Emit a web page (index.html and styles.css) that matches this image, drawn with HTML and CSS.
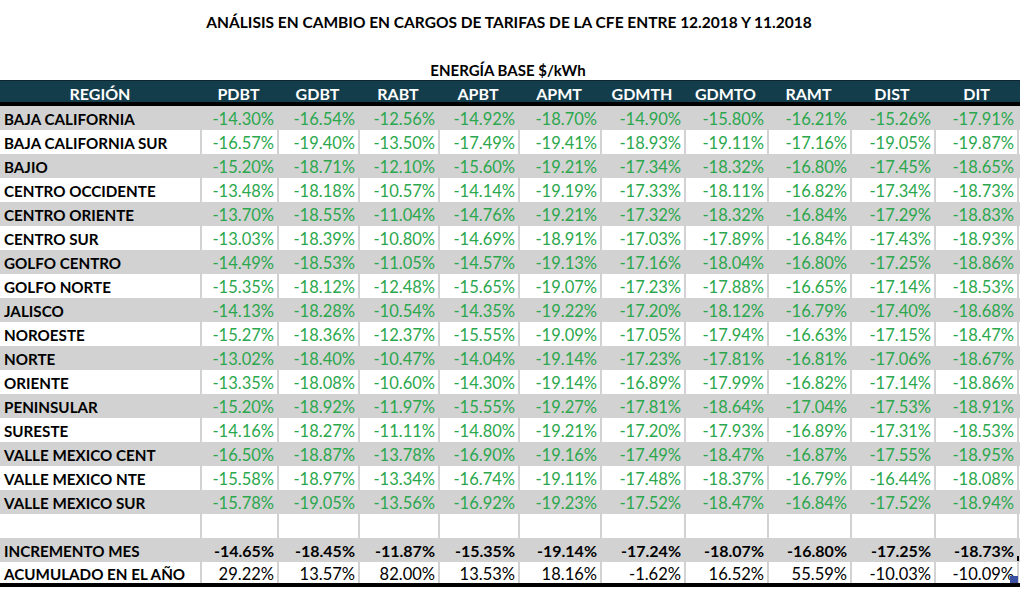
FILE: index.html
```html
<!DOCTYPE html>
<html lang="es">
<head>
<meta charset="utf-8">
<title>Análisis en cambio en cargos de tarifas de la CFE</title>
<link rel="stylesheet" href="styles.css">
</head>
<body>
<div class="sheet">
  <h1 class="title">ANÁLISIS EN CAMBIO EN CARGOS DE TARIFAS DE LA CFE ENTRE 12.2018 Y 11.2018</h1>
  <h2 class="subtitle">ENERGÍA BASE $/kWh</h2>
  <div class="grid">
    <div class="row head">
      <div class="c">REGIÓN</div><div class="c">PDBT</div><div class="c">GDBT</div><div class="c">RABT</div><div class="c">APBT</div><div class="c">APMT</div><div class="c">GDMTH</div><div class="c">GDMTO</div><div class="c">RAMT</div><div class="c">DIST</div><div class="c">DIT</div>
    </div>
    <div class="row shade"><div class="c name">BAJA CALIFORNIA</div><div class="c n">-14.30%</div><div class="c n">-16.54%</div><div class="c n">-12.56%</div><div class="c n">-14.92%</div><div class="c n">-18.70%</div><div class="c n">-14.90%</div><div class="c n">-15.80%</div><div class="c n">-16.21%</div><div class="c n">-15.26%</div><div class="c n">-17.91%</div></div>
    <div class="row"><div class="c name">BAJA CALIFORNIA SUR</div><div class="c n">-16.57%</div><div class="c n">-19.40%</div><div class="c n">-13.50%</div><div class="c n">-17.49%</div><div class="c n">-19.41%</div><div class="c n">-18.93%</div><div class="c n">-19.11%</div><div class="c n">-17.16%</div><div class="c n">-19.05%</div><div class="c n">-19.87%</div></div>
    <div class="row shade"><div class="c name">BAJIO</div><div class="c n">-15.20%</div><div class="c n">-18.71%</div><div class="c n">-12.10%</div><div class="c n">-15.60%</div><div class="c n">-19.21%</div><div class="c n">-17.34%</div><div class="c n">-18.32%</div><div class="c n">-16.80%</div><div class="c n">-17.45%</div><div class="c n">-18.65%</div></div>
    <div class="row"><div class="c name">CENTRO OCCIDENTE</div><div class="c n">-13.48%</div><div class="c n">-18.18%</div><div class="c n">-10.57%</div><div class="c n">-14.14%</div><div class="c n">-19.19%</div><div class="c n">-17.33%</div><div class="c n">-18.11%</div><div class="c n">-16.82%</div><div class="c n">-17.34%</div><div class="c n">-18.73%</div></div>
    <div class="row shade"><div class="c name">CENTRO ORIENTE</div><div class="c n">-13.70%</div><div class="c n">-18.55%</div><div class="c n">-11.04%</div><div class="c n">-14.76%</div><div class="c n">-19.21%</div><div class="c n">-17.32%</div><div class="c n">-18.32%</div><div class="c n">-16.84%</div><div class="c n">-17.29%</div><div class="c n">-18.83%</div></div>
    <div class="row"><div class="c name">CENTRO SUR</div><div class="c n">-13.03%</div><div class="c n">-18.39%</div><div class="c n">-10.80%</div><div class="c n">-14.69%</div><div class="c n">-18.91%</div><div class="c n">-17.03%</div><div class="c n">-17.89%</div><div class="c n">-16.84%</div><div class="c n">-17.43%</div><div class="c n">-18.93%</div></div>
    <div class="row shade"><div class="c name">GOLFO CENTRO</div><div class="c n">-14.49%</div><div class="c n">-18.53%</div><div class="c n">-11.05%</div><div class="c n">-14.57%</div><div class="c n">-19.13%</div><div class="c n">-17.16%</div><div class="c n">-18.04%</div><div class="c n">-16.80%</div><div class="c n">-17.25%</div><div class="c n">-18.86%</div></div>
    <div class="row"><div class="c name">GOLFO NORTE</div><div class="c n">-15.35%</div><div class="c n">-18.12%</div><div class="c n">-12.48%</div><div class="c n">-15.65%</div><div class="c n">-19.07%</div><div class="c n">-17.23%</div><div class="c n">-17.88%</div><div class="c n">-16.65%</div><div class="c n">-17.14%</div><div class="c n">-18.53%</div></div>
    <div class="row shade"><div class="c name">JALISCO</div><div class="c n">-14.13%</div><div class="c n">-18.28%</div><div class="c n">-10.54%</div><div class="c n">-14.35%</div><div class="c n">-19.22%</div><div class="c n">-17.20%</div><div class="c n">-18.12%</div><div class="c n">-16.79%</div><div class="c n">-17.40%</div><div class="c n">-18.68%</div></div>
    <div class="row"><div class="c name">NOROESTE</div><div class="c n">-15.27%</div><div class="c n">-18.36%</div><div class="c n">-12.37%</div><div class="c n">-15.55%</div><div class="c n">-19.09%</div><div class="c n">-17.05%</div><div class="c n">-17.94%</div><div class="c n">-16.63%</div><div class="c n">-17.15%</div><div class="c n">-18.47%</div></div>
    <div class="row shade"><div class="c name">NORTE</div><div class="c n">-13.02%</div><div class="c n">-18.40%</div><div class="c n">-10.47%</div><div class="c n">-14.04%</div><div class="c n">-19.14%</div><div class="c n">-17.23%</div><div class="c n">-17.81%</div><div class="c n">-16.81%</div><div class="c n">-17.06%</div><div class="c n">-18.67%</div></div>
    <div class="row"><div class="c name">ORIENTE</div><div class="c n">-13.35%</div><div class="c n">-18.08%</div><div class="c n">-10.60%</div><div class="c n">-14.30%</div><div class="c n">-19.14%</div><div class="c n">-16.89%</div><div class="c n">-17.99%</div><div class="c n">-16.82%</div><div class="c n">-17.14%</div><div class="c n">-18.86%</div></div>
    <div class="row shade"><div class="c name">PENINSULAR</div><div class="c n">-15.20%</div><div class="c n">-18.92%</div><div class="c n">-11.97%</div><div class="c n">-15.55%</div><div class="c n">-19.27%</div><div class="c n">-17.81%</div><div class="c n">-18.64%</div><div class="c n">-17.04%</div><div class="c n">-17.53%</div><div class="c n">-18.91%</div></div>
    <div class="row"><div class="c name">SURESTE</div><div class="c n">-14.16%</div><div class="c n">-18.27%</div><div class="c n">-11.11%</div><div class="c n">-14.80%</div><div class="c n">-19.21%</div><div class="c n">-17.20%</div><div class="c n">-17.93%</div><div class="c n">-16.89%</div><div class="c n">-17.31%</div><div class="c n">-18.53%</div></div>
    <div class="row shade"><div class="c name">VALLE MEXICO CENT</div><div class="c n">-16.50%</div><div class="c n">-18.87%</div><div class="c n">-13.78%</div><div class="c n">-16.90%</div><div class="c n">-19.16%</div><div class="c n">-17.49%</div><div class="c n">-18.47%</div><div class="c n">-16.87%</div><div class="c n">-17.55%</div><div class="c n">-18.95%</div></div>
    <div class="row"><div class="c name">VALLE MEXICO NTE</div><div class="c n">-15.58%</div><div class="c n">-18.97%</div><div class="c n">-13.34%</div><div class="c n">-16.74%</div><div class="c n">-19.11%</div><div class="c n">-17.48%</div><div class="c n">-18.37%</div><div class="c n">-16.79%</div><div class="c n">-16.44%</div><div class="c n">-18.08%</div></div>
    <div class="row shade"><div class="c name">VALLE MEXICO SUR</div><div class="c n">-15.78%</div><div class="c n">-19.05%</div><div class="c n">-13.56%</div><div class="c n">-16.92%</div><div class="c n">-19.23%</div><div class="c n">-17.52%</div><div class="c n">-18.47%</div><div class="c n">-16.84%</div><div class="c n">-17.52%</div><div class="c n">-18.94%</div></div>
    <div class="row"><div class="c name"></div><div class="c n"></div><div class="c n"></div><div class="c n"></div><div class="c n"></div><div class="c n"></div><div class="c n"></div><div class="c n"></div><div class="c n"></div><div class="c n"></div><div class="c n"></div></div>
    <div class="row shade total"><div class="c name">INCREMENTO MES</div><div class="c n">-14.65%</div><div class="c n">-18.45%</div><div class="c n">-11.87%</div><div class="c n">-15.35%</div><div class="c n">-19.14%</div><div class="c n">-17.24%</div><div class="c n">-18.07%</div><div class="c n">-16.80%</div><div class="c n">-17.25%</div><div class="c n">-18.73%</div></div>
    <div class="row last"><div class="c name">ACUMULADO EN EL AÑO</div><div class="c n">29.22%</div><div class="c n">13.57%</div><div class="c n">82.00%</div><div class="c n">13.53%</div><div class="c n">18.16%</div><div class="c n">-1.62%</div><div class="c n">16.52%</div><div class="c n">55.59%</div><div class="c n">-10.03%</div><div class="c n">-10.09%</div></div>
    <span class="sel-mark"></span>
    <span class="fill-handle"></span>
  </div>
</div>
</body>
</html>
```

FILE: styles.css
```css
html, body {
  margin: 0;
  padding: 0;
  background: #ffffff;
}

body {
  font-family: Lato, "Open Sans", "Liberation Sans", sans-serif;
  color: #000000;
  width: 1020px;
  height: 594px;
  overflow: hidden;
}

.sheet {
  display: flex;
  flex-direction: column;
}

.title {
  margin: 10px 0 0 0;
  height: 24px;
  font-size: 15.5px;
  line-height: 24px;
  font-weight: 700;
  text-align: center;
  width: 1018px;
}

.subtitle {
  margin: 25px 0 0 0;
  height: 21px;
  font-size: 15px;
  line-height: 23px;
  font-weight: 700;
  text-align: center;
  width: 1016px;
}

.grid {
  position: relative;
  display: flex;
  flex-direction: column;
}

.row {
  display: grid;
  grid-template-columns: 200px 77px 81px 80px 80px 82px 84px 83px 83px 84px 85px;
  height: 24px;
  background: #ffffff;
}

.row .c {
  box-sizing: border-box;
  height: 24px;
  line-height: 26px;
  font-size: 16px;
  white-space: nowrap;
}

.row .n {
  border-left: 2px solid #d2d2d2;
  text-align: right;
  padding-right: 3px;
  color: #2ba74d;
  font-size: 16.5px;
}

.row .n:last-child {
  border-right: 2px solid #d2d2d2;
}

.row .name {
  font-weight: 700;
  font-size: 15.2px;
  padding-left: 4px;
}

.row.shade {
  background: #d2d2d2;
}

.row.head {
  height: 21px;
  background: #143d4c;
  border-top: 1px solid #0b2630;
  border-bottom: 4px solid #000000;
  color: #ffffff;
  font-weight: 700;
}

.row.head .c {
  height: 21px;
  line-height: 25px;
  text-align: center;
  font-size: 16px;
}

.row.total .n {
  color: #000000;
  font-weight: 700;
  font-size: 16px;
}

.row.last {
  height: 21px;
  border-bottom: 4px solid #000000;
}

.row.last .c {
  height: 21px;
  line-height: 24px;
}

.row.last .n {
  color: #000000;
}

.sel-mark {
  position: absolute;
  right: 1px;
  top: 476px;
  width: 2px;
  height: 5px;
  background: #000000;
}

.fill-handle {
  position: absolute;
  right: 2px;
  top: 496px;
  width: 8px;
  height: 7px;
  background: #3b4fa3;
}
```
